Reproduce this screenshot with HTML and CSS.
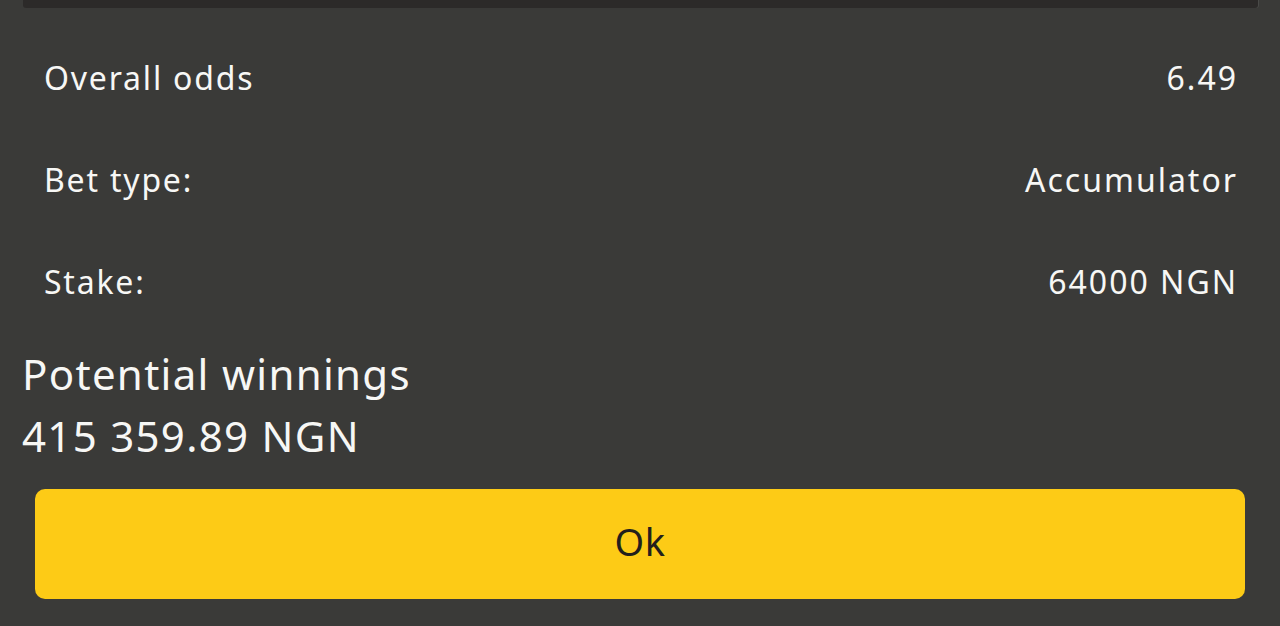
FILE: index.html
```html
<!DOCTYPE html>
<html>
<head>
<meta charset="utf-8">
<link rel="stylesheet" href="styles.css">
</head>
<body>
<div class="sheet">
  <div class="top-panel"></div>
  <div class="rows">
    <div class="row"><span class="label">Overall odds</span><span class="value">6.49</span></div>
    <div class="row"><span class="label">Bet type:</span><span class="value">Accumulator</span></div>
    <div class="row"><span class="label">Stake:</span><span class="value">64000 NGN</span></div>
  </div>
  <div class="winnings">
    <div>Potential winnings</div>
    <div>415 359.89 NGN</div>
  </div>
  <div class="actions">
    <button class="ok">Ok</button>
  </div>
</div>
</body>
</html>
```
FILE: styles.css
```css
html, body {
  margin: 0;
  padding: 0;
  background: #3a3a38;
}
body {
  font-family: "Noto Sans", "Open Sans", sans-serif;
  color: #f7f7f5;
  height: 626px;
  overflow: hidden;
}
.top-panel {
  height: 8px;
  margin: 0 22px 0 23px;
  background: #2c2a29;
  border-radius: 0 0 3px 3px;
  box-shadow: 1px 0 0 #4a4a48;
}
.rows {
  padding: 18px 42px 0 44px;
}
.row {
  display: flex;
  justify-content: space-between;
  align-items: center;
  height: 102px;
  font-size: 32px;
  letter-spacing: 1.8px;
}
.row .value {
  letter-spacing: 2px;
}
.winnings {
  margin-top: 11px;
  padding: 0 22px;
  font-size: 42px;
  line-height: 62px;
  letter-spacing: 1.3px;
}
.actions {
  padding: 22px 35px 0 35px;
}
.ok {
  display: block;
  width: 100%;
  height: 110px;
  border: none;
  border-radius: 10px;
  background: #fdcb16;
  color: #231f1c;
  font-family: "Noto Sans", "Open Sans", sans-serif;
  font-size: 38px;
  letter-spacing: 0.5px;
  padding: 0 0 6px 0;
}
```
